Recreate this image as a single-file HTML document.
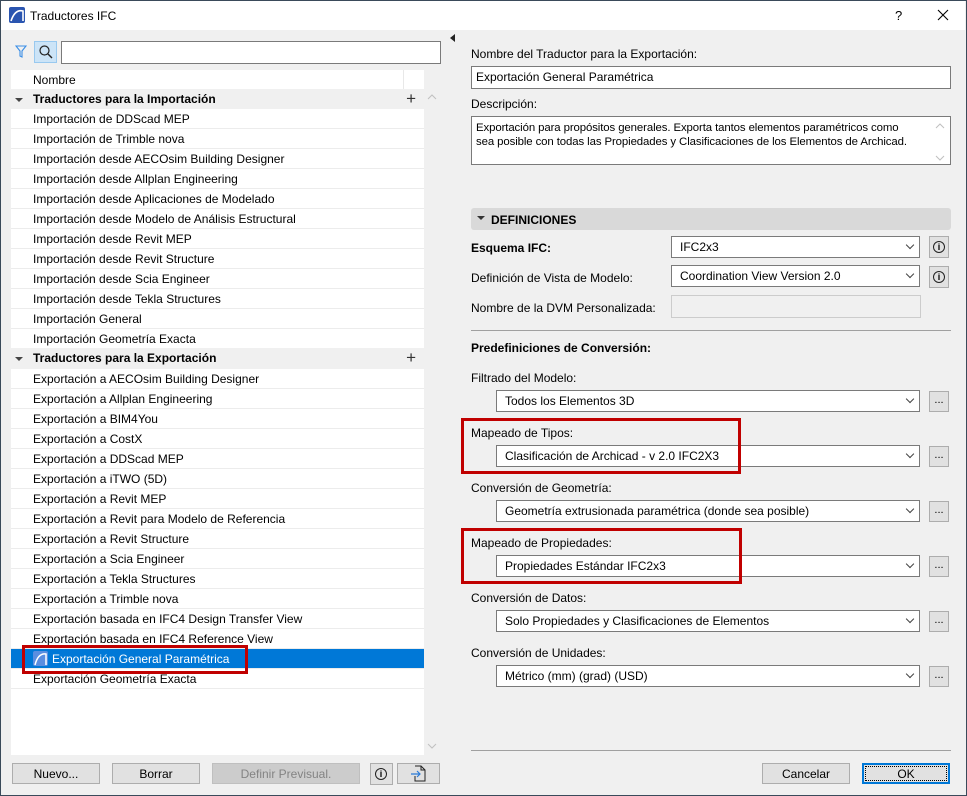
<!DOCTYPE html>
<html><head><meta charset="utf-8"><style>
*{box-sizing:border-box;margin:0;padding:0}
body{width:967px;height:796px;overflow:hidden;background:#f0f0f0;font-family:"Liberation Sans",sans-serif;font-size:12px;color:#000;position:relative}
.a{position:absolute}
.win{position:absolute;left:0;top:0;width:967px;height:796px;border:1px solid #3a4a5a}
.title{position:absolute;left:0;top:0;width:965px;height:30px;background:#fff}
.list{position:absolute;left:11px;top:70px;width:413px;height:685px;background:#fff}
.row{position:absolute;left:0;width:413px;height:20px;line-height:21px;padding-left:22px;border-bottom:1px solid #ececec;white-space:nowrap}
.grp{background:#f0f0f0;font-weight:bold;border-bottom:none}
.grp:before{content:"";position:absolute;left:4px;top:9px;border-left:4px solid transparent;border-right:4px solid transparent;border-top:4px solid #444}
.plus{position:absolute;right:8px;top:-1px;font-weight:normal;font-size:17px;color:#333}
.btn{position:absolute;height:21px;background:#e1e1e1;border:1px solid #adadad;text-align:center;line-height:20px}
.inp{position:absolute;background:#fff;border:1px solid #7a7a7a;padding-left:4px;line-height:21px;white-space:nowrap}
.sel{position:absolute;background:#fff;border:1px solid #7a7a7a;padding-left:8px;line-height:21px;height:22px;white-space:nowrap}
.sel:after{content:"";position:absolute;right:6px;top:5px;width:5px;height:5px;border-right:1px solid #444;border-bottom:1px solid #444;transform:rotate(45deg)}
.dots{position:absolute;width:20px;height:21px;background:#e1e1e1;border:1px solid #adadad;text-align:center;line-height:17px;font-size:11px}
.info{position:absolute;width:20px;height:22px;background:#e1e1e1;border:1px solid #adadad}
.info span{position:absolute;left:3px;top:4px;width:12px;height:12px;border:1.3px solid #222;border-radius:50%;font-size:9px;line-height:10px;text-align:center;font-weight:bold}
.red{position:absolute;border:3px solid #c00000}
.lbl{position:absolute;white-space:nowrap;margin-top:1px}
</style></head><body>
<div class="title">
<svg class="a" style="left:9px;top:7px" width="16" height="16"><rect width="16" height="16" rx="2" fill="#2a55b0"/><path d="M2 14 Q6 2 14 4 L14 14" fill="none" stroke="#fff" stroke-width="1.6"/></svg>
<div class="lbl" style="left:30px;top:8px;font-size:12px">Traductores IFC</div>
<div class="lbl" style="left:895px;top:7px;font-size:13px">?</div>
<svg class="a" style="left:937px;top:9px" width="12" height="12"><path d="M1 1L11 11M11 1L1 11" stroke="#000" stroke-width="1.1"/></svg>
</div>
<svg class="a" style="left:15px;top:45px" width="12" height="13"><path d="M1 1H11L7 6V12L5 11V6Z" fill="none" stroke="#3a8ee6" stroke-width="1.1"/></svg>
<div class="a" style="left:34px;top:41px;width:23px;height:22px;background:#cce4f7;border:1px solid #99c9ef"></div>
<svg class="a" style="left:38px;top:44px" width="16" height="16"><circle cx="6.5" cy="6.5" r="4.5" fill="none" stroke="#222" stroke-width="1.2"/><path d="M10 10L14 14" stroke="#222" stroke-width="1.4"/></svg>
<div class="inp" style="left:61px;top:41px;width:380px;height:23px"></div>
<div class="list">
<div class="row" style="top:0;padding-left:22px;border-right:1px solid #e8e8e8;width:393px">Nombre</div>
<div class="row grp" style="top:19px;height:20px">Traductores para la Importación<span class="plus">+</span></div>
<div class="row" style="top:39px">Importación de DDScad MEP</div>
<div class="row" style="top:59px">Importación de Trimble nova</div>
<div class="row" style="top:79px">Importación desde AECOsim Building Designer</div>
<div class="row" style="top:99px">Importación desde Allplan Engineering</div>
<div class="row" style="top:119px">Importación desde Aplicaciones de Modelado</div>
<div class="row" style="top:139px">Importación desde Modelo de Análisis Estructural</div>
<div class="row" style="top:159px">Importación desde Revit MEP</div>
<div class="row" style="top:179px">Importación desde Revit Structure</div>
<div class="row" style="top:199px">Importación desde Scia Engineer</div>
<div class="row" style="top:219px">Importación desde Tekla Structures</div>
<div class="row" style="top:239px">Importación General</div>
<div class="row" style="top:259px">Importación Geometría Exacta</div>
<div class="row grp" style="top:278px;height:21px">Traductores para la Exportación<span class="plus">+</span></div>
<div class="row" style="top:299px">Exportación a AECOsim Building Designer</div>
<div class="row" style="top:319px">Exportación a Allplan Engineering</div>
<div class="row" style="top:339px">Exportación a BIM4You</div>
<div class="row" style="top:359px">Exportación a CostX</div>
<div class="row" style="top:379px">Exportación a DDScad MEP</div>
<div class="row" style="top:399px">Exportación a iTWO (5D)</div>
<div class="row" style="top:419px">Exportación a Revit MEP</div>
<div class="row" style="top:439px">Exportación a Revit para Modelo de Referencia</div>
<div class="row" style="top:459px">Exportación a Revit Structure</div>
<div class="row" style="top:479px">Exportación a Scia Engineer</div>
<div class="row" style="top:499px">Exportación a Tekla Structures</div>
<div class="row" style="top:519px">Exportación a Trimble nova</div>
<div class="row" style="top:539px">Exportación basada en IFC4 Design Transfer View</div>
<div class="row" style="top:559px">Exportación basada en IFC4 Reference View</div>
<div class="row" style="top:579px;background:#0078d7;color:#fff;padding-left:41px">Exportación General Paramétrica</div>
<div class="row" style="top:599px">Exportación Geometría Exacta</div>
</div>
<svg class="a" style="left:33px;top:651px" width="15" height="15"><rect width="15" height="15" rx="2" fill="#5a8ee0"/><path d="M2 14 Q5 2 13 3 L13 14" fill="none" stroke="#fff" stroke-width="1.5"/></svg>
<div class="red" style="left:22px;top:645px;width:226px;height:29px"></div>
<svg class="a" style="left:427px;top:93px" width="10" height="8"><path d="M1 6L5 2L9 6" fill="none" stroke="#c0c0c0"/></svg>
<svg class="a" style="left:427px;top:742px" width="10" height="8"><path d="M1 2L5 6L9 2" fill="none" stroke="#c0c0c0"/></svg>
<svg class="a" style="left:450px;top:34px" width="6" height="8"><path d="M5 0V8L0 4Z" fill="#222"/></svg>
<div class="btn" style="left:12px;top:763px;width:88px">Nuevo...</div>
<div class="btn" style="left:112px;top:763px;width:88px">Borrar</div>
<div class="btn" style="left:212px;top:763px;width:148px;background:#cccccc;border-color:#bfbfbf;color:#838383">Definir Previsual.</div>
<div class="info" style="left:370px;top:763px;width:23px"><span style="left:4px">i</span></div>
<div class="btn" style="left:397px;top:763px;width:43px"></div>
<svg class="a" style="left:410px;top:765px" width="18" height="17"><path d="M5 1H11L15 5V16H5V11" fill="none" stroke="#222"/><path d="M11 1V5H15" fill="none" stroke="#222"/><path d="M1 9H10M7 6L10 9L7 12" fill="none" stroke="#2b7bd8" stroke-width="1.2"/></svg>

<div class="lbl" style="left:471px;top:46px">Nombre del Traductor para la Exportación:</div>
<div class="inp" style="left:471px;top:66px;width:480px;height:23px">Exportación General Paramétrica</div>
<div class="lbl" style="left:471px;top:96px">Descripción:</div>
<div class="inp" style="left:471px;top:116px;width:480px;height:49px;line-height:14px;padding-top:4px;white-space:normal;padding-right:4px;font-size:11.4px;letter-spacing:-0.1px">Exportación para propósitos generales. Exporta tantos elementos paramétricos como<br>sea posible con todas las Propiedades y Clasificaciones de los Elementos de Archicad.</div>
<svg class="a" style="left:935px;top:122px" width="10" height="40"><path d="M1 6L5 2L9 6M1 34L5 38L9 34" fill="none" stroke="#c0c0c0"/></svg>
<div class="a" style="left:471px;top:208px;width:480px;height:22px;background:#d9d9d9;border-radius:3px"></div>
<svg class="a" style="left:477px;top:216px" width="8" height="5"><path d="M0 0H8L4 4Z" fill="#333"/></svg>
<div class="lbl" style="left:491px;top:212px;font-weight:bold">DEFINICIONES</div>
<div class="lbl" style="left:471px;top:240px;font-weight:bold">Esquema IFC:</div>
<div class="sel" style="left:671px;top:236px;width:249px">IFC2x3</div>
<div class="info" style="left:929px;top:236px"><span>i</span></div>
<div class="lbl" style="left:471px;top:270px">Definición de Vista de Modelo:</div>
<div class="sel" style="left:671px;top:265px;width:249px">Coordination View Version 2.0</div>
<div class="info" style="left:929px;top:266px"><span>i</span></div>
<div class="lbl" style="left:471px;top:300px">Nombre de la DVM Personalizada:</div>
<div class="a" style="left:671px;top:295px;width:250px;height:23px;background:#f0f0f0;border:1px solid #cccccc"></div>
<div class="a" style="left:471px;top:330px;width:480px;height:1px;background:#a0a0a0"></div>
<div class="lbl" style="left:471px;top:340px;font-weight:bold">Predefiniciones de Conversión:</div>
<div class="lbl" style="left:471px;top:370px">Filtrado del Modelo:</div>
<div class="sel" style="left:496px;top:390px;width:424px">Todos los Elementos 3D</div>
<div class="dots" style="left:929px;top:391px">...</div>
<div class="lbl" style="left:471px;top:425px">Mapeado de Tipos:</div>
<div class="sel" style="left:496px;top:445px;width:424px">Clasificación de Archicad - v 2.0 IFC2X3</div>
<div class="dots" style="left:929px;top:446px">...</div>
<div class="lbl" style="left:471px;top:480px">Conversión de Geometría:</div>
<div class="sel" style="left:496px;top:500px;width:424px">Geometría extrusionada paramétrica (donde sea posible)</div>
<div class="dots" style="left:929px;top:501px">...</div>
<div class="lbl" style="left:471px;top:535px">Mapeado de Propiedades:</div>
<div class="sel" style="left:496px;top:555px;width:424px">Propiedades Estándar IFC2x3</div>
<div class="dots" style="left:929px;top:556px">...</div>
<div class="lbl" style="left:471px;top:590px">Conversión de Datos:</div>
<div class="sel" style="left:496px;top:610px;width:424px">Solo Propiedades y Clasificaciones de Elementos</div>
<div class="dots" style="left:929px;top:611px">...</div>
<div class="lbl" style="left:471px;top:645px">Conversión de Unidades:</div>
<div class="sel" style="left:496px;top:665px;width:424px">Métrico (mm) (grad) (USD)</div>
<div class="dots" style="left:929px;top:666px">...</div>
<div class="red" style="left:461px;top:418px;width:280px;height:56px"></div>
<div class="red" style="left:461px;top:528px;width:281px;height:56px"></div>
<div class="a" style="left:471px;top:750px;width:480px;height:1px;background:#a0a0a0"></div>
<div class="btn" style="left:762px;top:763px;width:88px">Cancelar</div>
<div class="btn" style="left:862px;top:763px;width:88px;border:2px solid #0078d7;line-height:18px"><div style="position:absolute;inset:1px;border:1px dotted #000"></div>OK</div>
<div class="win"></div>
</body></html>
